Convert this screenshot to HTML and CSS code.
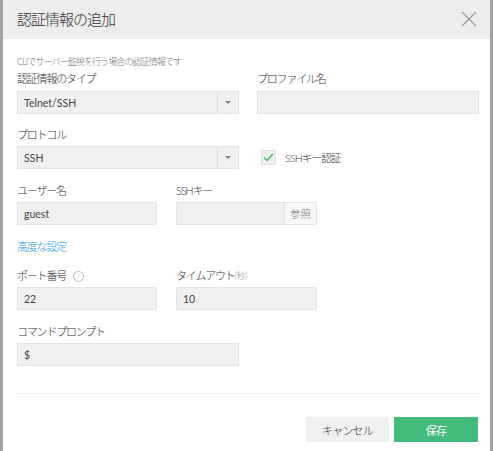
FILE: index.html
```html
<!DOCTYPE html>
<html lang="ja">
<head>
<meta charset="utf-8">
<title>認証情報の追加</title>
<link rel="stylesheet" href="styles.css">
</head>
<body>
<div class="frame">
  <div class="modal">
    <div class="header">
      <div class="title">認証情報の追加</div>
      <svg class="close" width="16" height="16" viewBox="0 0 16 16"><path d="M1 1L15 15M15 1L1 15" stroke="#9a9a9a" stroke-width="1.2" fill="none"/></svg>
    </div>
    <div class="body">
      <div class="subtitle">CLIでサーバー監視を行う場合の認証情報です</div>
      <div class="row r1">
        <div class="field w222">
          <div class="label">認証情報のタイプ</div>
          <div class="select"><span class="val">Telnet/SSH</span><span class="arrow"><i></i></span></div>
        </div>
        <div class="field w222">
          <div class="label">プロファイル名</div>
          <div class="input"></div>
        </div>
      </div>
      <div class="row r2">
        <div class="field w222">
          <div class="label">プロトコル</div>
          <div class="select"><span class="val">SSH</span><span class="arrow"><i></i></span></div>
        </div>
        <div class="check">
          <span class="box"><svg width="11" height="9" viewBox="0 0 11 9"><path d="M1 4.5L4 7.5L10 1" stroke="#3fb872" stroke-width="1.4" fill="none"/></svg></span>
          <span class="checktext">SSHキー認証</span>
        </div>
      </div>
      <div class="row r3">
        <div class="field w140">
          <div class="label">ユーザー名</div>
          <div class="input"><span class="val">guest</span></div>
        </div>
        <div class="field w141">
          <div class="label">SSHキー</div>
          <div class="filebox"><span class="filein"></span><span class="browse">参照</span></div>
        </div>
      </div>
      <div class="link">高度な設定</div>
      <div class="row r4">
        <div class="field w140">
          <div class="label">ポート番号 <span class="help">?</span></div>
          <div class="input"><span class="val">22</span></div>
        </div>
        <div class="field w141">
          <div class="label">タイムアウト<span class="unit">(秒)</span></div>
          <div class="input"><span class="val">10</span></div>
        </div>
      </div>
      <div class="row r5">
        <div class="field w222">
          <div class="label">コマンドプロンプト</div>
          <div class="input"><span class="val">$</span></div>
        </div>
      </div>
      <div class="divider"></div>
      <div class="actions">
        <div class="btn cancel">キャンセル</div>
        <div class="btn save">保存</div>
      </div>
    </div>
  </div>
</div>
</body>
</html>
```
FILE: styles.css
```css
html, body {
  margin: 0;
  padding: 0;
}
body {
  width: 493px;
  height: 451px;
  overflow: hidden;
  background: #a3a3a3;
  font-family: Lato, "Noto Sans CJK JP", sans-serif;
  color: #333;
}
.frame {
  padding: 0 3px;
  height: 451px;
}
.modal {
  background: #fff;
  height: 451px;
  display: flex;
  flex-direction: column;
}
.header {
  height: 39px;
  background: #ededed;
  display: flex;
  align-items: center;
  justify-content: space-between;
  padding: 0 13px 0 14px;
}
.title {
  font-size: 15px;
  font-weight: 300;
  letter-spacing: -1px;
  color: #333;
  padding-bottom: 2px;
}
.close {
  display: block;
  margin-top: -1px;
}
.body {
  padding: 17px 11px 0 14px;
}
.subtitle {
  font-size: 9px;
  font-weight: 300;
  line-height: 12px;
  letter-spacing: -0.9px;
  color: #777;
}
.row {
  display: flex;
  gap: 18px;
}
.r1 { margin-top: 3px; }
.r2 { margin-top: 13px; }
.r3 { margin-top: 14px; gap: 19px; }
.r4 { margin-top: 13px; gap: 19px; }
.r5 { margin-top: 14px; }
.field { display: flex; flex-direction: column; }
.w222 { width: 222px; }
.w140 { width: 140px; }
.w141 { width: 141px; }
.label {
  font-size: 11px;
  font-weight: 300;
  line-height: 16px;
  letter-spacing: -1.2px;
  margin-bottom: 3px;
  color: #333;
  display: flex;
  align-items: center;
}
.r1 .label { margin-bottom: 4px; }
.input, .select, .filebox {
  height: 23px;
  box-sizing: border-box;
  background: #f0f0f0;
  border: 1px solid #e4e4e4;
  display: flex;
  align-items: center;
}
.val {
  font-size: 10.5px;
  color: #444;
  padding-left: 6px;
  flex: 1;
}
.arrow {
  width: 20px;
  height: 100%;
  border-left: 1px solid #dcdcdc;
  display: flex;
  align-items: center;
  justify-content: center;
}
.arrow i {
  width: 0;
  height: 0;
  border-left: 3px solid transparent;
  border-right: 3px solid transparent;
  border-top: 3px solid #888;
}
.check {
  display: flex;
  align-items: center;
  margin-left: 4px;
  margin-top: 19px;
  height: 23px;
}
.box {
  width: 15px;
  height: 15px;
  box-sizing: border-box;
  background: #f0f0f0;
  border: 1px solid #e2e2e2;
  display: flex;
  align-items: center;
  justify-content: center;
}
.checktext {
  font-size: 10.5px;
  font-weight: 300;
  letter-spacing: -0.8px;
  margin-left: 9px;
  color: #333;
}
.filein { flex: 1; height: 100%; }
.browse {
  width: 31px;
  height: 100%;
  border-left: 1px solid #e0e0e0;
  background: #f8f8f8;
  font-size: 10.5px;
  font-weight: 300;
  color: #777;
  display: flex;
  align-items: center;
  justify-content: center;
}
.link {
  margin-top: 14px;
  font-size: 11px;
  font-weight: 300;
  line-height: 16px;
  letter-spacing: -1.2px;
  color: #2b9be0;
}
.help {
  display: inline-flex;
  width: 9px;
  height: 9px;
  border: 1px solid #bbb;
  border-radius: 50%;
  font-size: 6px;
  color: #999;
  align-items: center;
  justify-content: center;
  margin-left: 7px;
  letter-spacing: 0;
}
.unit {
  font-size: 9px;
  color: #999;
  letter-spacing: -0.5px;
}
.divider {
  margin-top: 27px;
  height: 1px;
  background: #efefef;
  width: 462px;
}
.actions {
  margin-top: 23px;
  display: flex;
  justify-content: flex-end;
  gap: 5px;
  padding-right: 1px;
}
.btn {
  height: 25px;
  width: 83px;
  display: flex;
  align-items: center;
  justify-content: center;
  font-size: 11px;
  font-weight: 300;
  letter-spacing: -0.8px;
}
.cancel {
  background: #f0f0f0;
  color: #333;
}
.save {
  width: 84px;
  background: #43bb7c;
  color: #fff;
  font-weight: 400;
}
```
